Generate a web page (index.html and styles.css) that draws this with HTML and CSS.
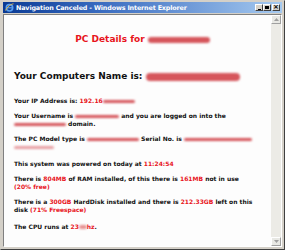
FILE: index.html
```html
<!DOCTYPE html>
<html>
<head>
<meta charset="utf-8">
<link rel="stylesheet" href="styles.css">
</head>
<body>
<div class="window">
  <div class="titlebar">
    <svg class="ie" width="9" height="9" viewBox="0 0 9 9"><circle cx="4.5" cy="4.8" r="3.2" fill="none" stroke="#5aa0f0" stroke-width="1.6"/><path d="M2 4.8h5" stroke="#5aa0f0" stroke-width="1.2"/><path d="M0.5 7.5C2 4 6 1 8.5 0.8" stroke="#f0c040" stroke-width="0.9" fill="none"/></svg>
    <span class="title">Navigation Canceled - Windows Internet Explorer</span>
    <div class="btns">
      <span class="btn"><span class="min"></span></span>
      <span class="btn"><span class="max"></span></span>
      <span class="btn close">×</span>
    </div>
  </div>
  <div class="client">
    <div class="content">
      <h1 class="head">PC Details for <span class="blob b-head"></span></h1>
      <h2 class="name">Your Computers Name is: <span class="blob b-name"></span></h2>
      <p class="first">Your IP Address is: <span class="red">192.16</span><span class="blob b-ip"></span></p>
      <p>Your Username is <span class="blob b-user"></span> and you are logged on into the <span class="blob b-dom"></span> domain.</p>
      <p>The PC Model type is <span class="blob b-model"></span> Serial No. is <span class="blob b-serial"></span> <span class="blob b-serial2"></span></p>
      <p class="gap">This system was powered on today at <span class="red">11:24:54</span></p>
      <p>There is <span class="red">804MB</span> of RAM installed, of this there is <span class="red">161MB</span> not in use <span class="red">(20% free)</span></p>
      <p>There is a <span class="red">300GB</span> HardDisk installed and there is <span class="red">212.33GB</span> left on this disk <span class="red">(71% Freespace)</span></p>
      <p class="gap">The CPU runs at <span class="red">23<span class="blob b-cpu"></span>hz</span>.</p>
    </div>
    <div class="scrollbar">
      <span class="sbtn"><svg width="5" height="3" viewBox="0 0 5 3"><path d="M0 3L2.5 0L5 3Z" fill="#a0a0a0"/></svg></span>
      <span class="track"></span>
      <span class="sbtn"><svg width="5" height="3" viewBox="0 0 5 3"><path d="M0 0L2.5 3L5 0Z" fill="#a0a0a0"/></svg></span>
    </div>
  </div>
</div>
</body>
</html>
```
FILE: styles.css
```css
html, body { margin: 0; padding: 0; }
body { width: 285px; height: 250px; overflow: hidden; background: #d4d0c8; }
.window {
  width: 285px; height: 250px; box-sizing: border-box;
  display: flex; flex-direction: column;
  background: #d4d0c8;
  border: 1px solid #d4d0c8;
  border-right-color: #404040; border-bottom-color: #404040;
  padding: 1px 2px 2px 2px;
}
.titlebar {
  height: 11px; flex: none;
  display: flex; align-items: center; gap: 2px;
  padding: 0 2px 0 2px;
  background: linear-gradient(to right, #0a3a94 0%, #3a6cc0 35%, #a6caf0 100%);
  color: #fff;
  font: bold 6.4px "DejaVu Sans", sans-serif;
}
.ie { flex: none; }
.title { flex: 1; white-space: nowrap; letter-spacing: -0.15px; }
.btns { display: flex; gap: 0; }
.btn {
  width: 8px; height: 7px; box-sizing: border-box; background: #d4d0c8;
  border: 1px solid #fff; border-right-color: #404040; border-bottom-color: #404040;
  display: flex; align-items: center; justify-content: center;
  color: #000; font: bold 7px/1 "DejaVu Sans", sans-serif;
}
.btn.close { margin-left: 1px; }
.min { width: 3px; height: 1px; background: #000; margin-top: 3px; }
.max { width: 4px; height: 3px; border: 1px solid #000; border-top-width: 2px; box-sizing: border-box; }
.client {
  flex: 1; display: flex; margin-top: 1px;
  border: 1px solid #808080; border-right-color: #fff; border-bottom-color: #fff;
  background: #fff;
  min-height: 0;
}
.content {
  flex: 1; padding: 0 0 0 10px; background: #fdfdfd;
  font-family: "DejaVu Sans", Verdana, sans-serif; font-weight: bold; color: #111;
}
.head { margin: 19px 0 0 0; text-align: center; color: #e8141c; font-size: 9px; line-height: 10px; font-weight: bold; }
.name { margin: 26px 0 0 0; font-size: 9px; line-height: 12px; font-weight: bold; }
p { margin: 7px 0 0 0; font-size: 6px; line-height: 8px; padding-right: 10px; }
p.first { margin-top: 15px; }
p.gap { margin-top: 9px; }
.red { color: #e8141c; white-space: nowrap; }
.blob {
  display: inline-block; background: #d6565c; border-radius: 4px;
  filter: blur(0.8px); vertical-align: middle;
}
.b-head { width: 62px; height: 6px; }
.b-name { width: 94px; height: 8px; }
.b-ip { width: 32px; height: 3px; }
.b-user { width: 44px; height: 3px; }
.b-dom { width: 52px; height: 3px; }
.b-model { width: 52px; height: 3px; }
.b-serial { width: 68px; height: 3px; }
.b-serial2 { width: 40px; height: 3px; background: #e8a0a4; }
.b-cpu { width: 8px; height: 4px; background: #e69090; }
.scrollbar {
  width: 10px; flex: none; display: flex; flex-direction: column;
  background: #ecebe6;
}
.sbtn {
  height: 9px; box-sizing: border-box; background: #e8e8e4;
  border: 1px solid #fff; border-right-color: #a0a0a0; border-bottom-color: #a0a0a0;
  display: flex; align-items: center; justify-content: center;
}
.track { flex: 1; }
```
